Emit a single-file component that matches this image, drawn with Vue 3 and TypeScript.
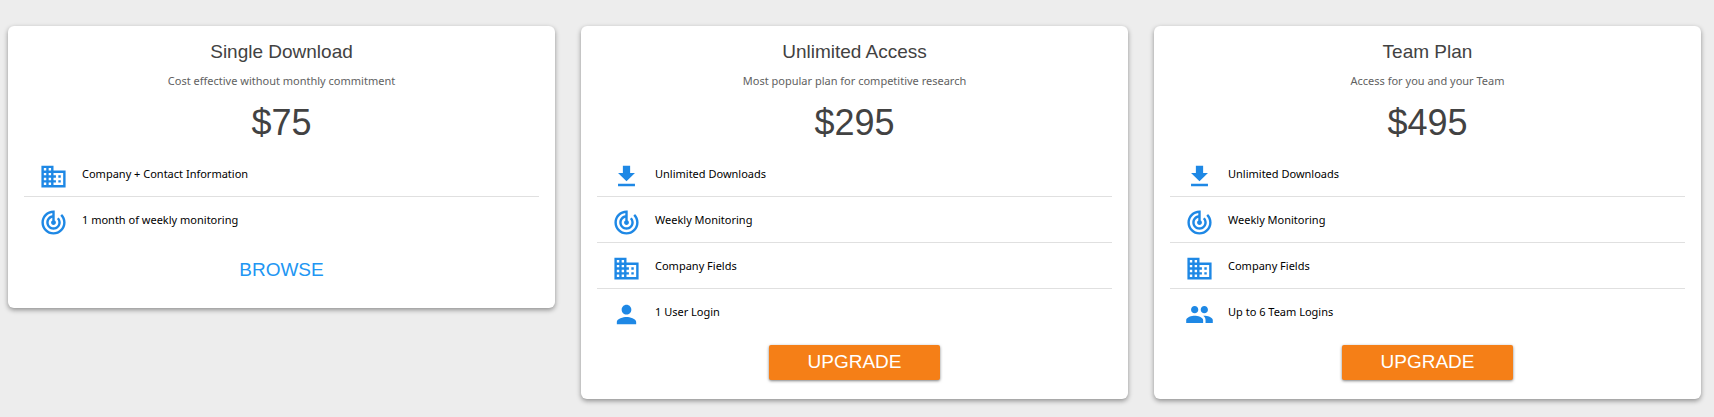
<script setup lang="ts">
type IconName = 'company' | 'tracking' | 'download' | 'person' | 'people'

interface Feature {
  icon: IconName
  label: string
}

interface Plan {
  name: string
  tagline: string
  price: string
  features: Feature[]
  action: string
  raised: boolean
}

const iconPaths: Record<IconName, string> = {
  company:
    'M12 7V3H2v18h20V7H12zM6 19H4v-2h2v2zm0-4H4v-2h2v2zm0-4H4V9h2v2zm0-4H4V5h2v2zm4 12H8v-2h2v2zm0-4H8v-2h2v2zm0-4H8V9h2v2zm0-4H8V5h2v2zm10 12h-8v-2h2v-2h-2v-2h2v-2h-2V9h8v10zm-2-8h-2v2h2v-2zm0 4h-2v2h2v-2z',
  tracking:
    'M19.07 4.93l-1.41 1.41C19.1 7.79 20 9.79 20 12c0 4.42-3.58 8-8 8s-8-3.58-8-8c0-4.08 3.05-7.44 7-7.93v2.02C8.16 6.57 6 9.03 6 12c0 3.31 2.69 6 6 6s6-2.69 6-6c0-1.66-.67-3.16-1.76-4.24l-1.41 1.41C15.55 9.9 16 10.9 16 12c0 2.21-1.79 4-4 4s-4-1.79-4-4c0-1.86 1.28-3.41 3-3.86v2.14c-.6.35-1 .98-1 1.72 0 1.1.9 2 2 2s2-.9 2-2c0-.74-.4-1.38-1-1.72V2h-1C6.48 2 2 6.48 2 12s4.48 10 10 10 10-4.48 10-10c0-2.76-1.12-5.26-2.93-7.07z',
  download: 'M19 9h-4V3H9v6H5l7 7 7-7zM5 18v2h14v-2H5z',
  person:
    'M12 12c2.21 0 4-1.79 4-4s-1.79-4-4-4-4 1.79-4 4 1.79 4 4 4zm0 2c-2.67 0-8 1.34-8 4v2h16v-2c0-2.66-5.33-4-8-4z',
  people:
    'M16 11c1.66 0 2.99-1.34 2.99-3S17.66 5 16 5c-1.66 0-3 1.34-3 3s1.34 3 3 3zm-8 0c1.66 0 2.99-1.34 2.99-3S9.66 5 8 5C6.34 5 5 6.34 5 8s1.34 3 3 3zm0 2c-2.33 0-7 1.17-7 3.5V19h14v-2.5c0-2.33-4.67-3.5-7-3.5zm8 0c-.29 0-.62.02-.97.05 1.16.84 1.97 1.97 1.97 3.45V19h6v-2.5c0-2.33-4.67-3.5-7-3.5z',
}

const plans: Plan[] = [
  {
    name: 'Single Download',
    tagline: 'Cost effective without monthly commitment',
    price: '$75',
    features: [
      { icon: 'company', label: 'Company + Contact Information' },
      { icon: 'tracking', label: '1 month of weekly monitoring' },
    ],
    action: 'BROWSE',
    raised: false,
  },
  {
    name: 'Unlimited Access',
    tagline: 'Most popular plan for competitive research',
    price: '$295',
    features: [
      { icon: 'download', label: 'Unlimited Downloads' },
      { icon: 'tracking', label: 'Weekly Monitoring' },
      { icon: 'company', label: 'Company Fields' },
      { icon: 'person', label: '1 User Login' },
    ],
    action: 'UPGRADE',
    raised: true,
  },
  {
    name: 'Team Plan',
    tagline: 'Access for you and your Team',
    price: '$495',
    features: [
      { icon: 'download', label: 'Unlimited Downloads' },
      { icon: 'tracking', label: 'Weekly Monitoring' },
      { icon: 'company', label: 'Company Fields' },
      { icon: 'people', label: 'Up to 6 Team Logins' },
    ],
    action: 'UPGRADE',
    raised: true,
  },
]
</script>

<template>
  <main class="plans">
    <section v-for="plan in plans" :key="plan.name" class="card">
      <h2 class="name">{{ plan.name }}</h2>
      <p class="tagline">{{ plan.tagline }}</p>
      <p class="price">{{ plan.price }}</p>
      <ul class="features">
        <li v-for="feature in plan.features" :key="feature.label" class="feature">
          <svg class="icon" viewBox="0 0 24 24" aria-hidden="true">
            <path :d="iconPaths[feature.icon]" />
          </svg>
          <span>{{ feature.label }}</span>
        </li>
      </ul>
      <button type="button" class="action" :class="{ raised: plan.raised }">{{ plan.action }}</button>
    </section>
  </main>
</template>

<style>
body {
  margin: 0;
  background: #ededed;
}
</style>

<style scoped>
.plans {
  display: grid;
  grid-template-columns: repeat(3, 1fr);
  align-items: start;
  gap: 26px;
  padding: 26px 13px 18px 8px;
  font-family: 'Noto Sans', 'Open Sans', sans-serif;
  font-size: 11px;
  color: #000;
}

.card {
  display: flex;
  flex-direction: column;
  padding: 11px 16px 19px;
  border-radius: 6px;
  background: #fff;
  box-shadow: 0 2px 5px rgba(0, 0, 0, 0.4);
}

.name,
.price {
  margin: 0;
  font-family: 'Liberation Sans', Arial, sans-serif;
  font-weight: 400;
  text-align: center;
  color: #424242;
}

.name {
  font-size: 19px;
  line-height: 30px;
}

.tagline {
  margin: 0;
  line-height: 27px;
  text-align: center;
  color: #616161;
}

.price {
  font-size: 36px;
  line-height: 57px;
}

.features {
  margin: 0;
  padding: 0;
  list-style: none;
}

.feature {
  display: flex;
  align-items: center;
  gap: 14px;
  box-sizing: border-box;
  height: 46px;
  padding-left: 15px;
  border-bottom: 1px solid #e0e0e0;
}

.feature:last-child {
  border-bottom-color: transparent;
}

.icon {
  width: 29px;
  height: 29px;
  margin-top: 6px;
  fill: #1e88e5;
}

.action {
  align-self: center;
  width: calc(100% / 3);
  height: 36px;
  margin-top: 10px;
  padding: 0 0 2px;
  border: 0;
  border-radius: 2px;
  background: transparent;
  font-family: 'Liberation Sans', Arial, sans-serif;
  font-size: 19px;
  color: #2196f3;
  cursor: pointer;
}

.action.raised {
  height: 35px;
  background: #f57f17;
  color: #fff;
  box-shadow: 0 1px 3px rgba(0, 0, 0, 0.5);
}
</style>
